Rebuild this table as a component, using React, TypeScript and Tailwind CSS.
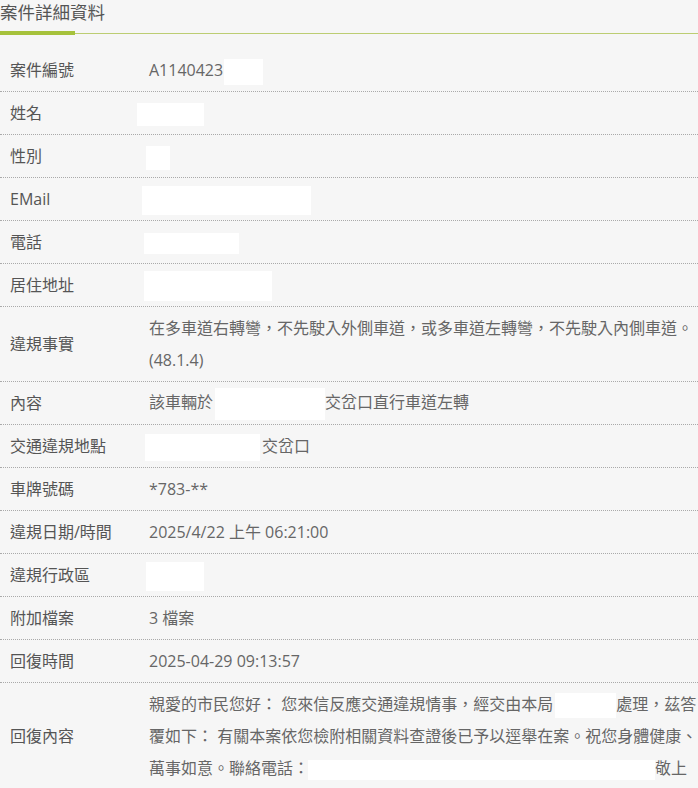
import React from 'react'

type Row = {
  label: string
  value: React.ReactNode
  lines?: 1 | 2 | 3
}

// white redaction block, same as in the screenshot
function Blank({ w, h, ml = 0 }: { w: number; h: number; ml?: number }) {
  return (
    <span
      className="inline-block align-middle bg-white"
      style={{ width: w, height: h, marginLeft: ml }}
    />
  )
}

const ROW_HEIGHT = {
  1: 'h-[43px]',
  2: 'h-[75px]',
  3: 'h-[107px]',
}

const ROWS: Row[] = [
  { label: '案件編號', value: <>A1140423<Blank w={39} h={26} ml={1} /></> },
  { label: '姓名', value: <Blank w={67} h={23} ml={-12} /> },
  { label: '性別', value: <Blank w={24} h={24} ml={-3} /> },
  { label: 'EMail', value: <Blank w={169} h={29} ml={-7} /> },
  { label: '電話', value: <Blank w={95} h={21} ml={-5} /> },
  { label: '居住地址', value: <Blank w={128} h={30} ml={-5} /> },
  {
    label: '違規事實',
    value: '在多車道右轉彎，不先駛入外側車道，或多車道左轉彎，不先駛入內側車道。(48.1.4)',
    lines: 2,
  },
  { label: '內容', value: <>該車輛於<Blank w={110} h={32} ml={2} />交岔口直行車道左轉</> },
  { label: '交通違規地點', value: <><Blank w={115} h={27} ml={-4} /><span className="ml-[2px]">交岔口</span></> },
  { label: '車牌號碼', value: '*783-**' },
  { label: '違規日期/時間', value: '2025/4/22 上午 06:21:00' },
  { label: '違規行政區', value: <Blank w={58} h={29} ml={-3} /> },
  { label: '附加檔案', value: '3 檔案' },
  { label: '回復時間', value: '2025-04-29 09:13:57' },
  {
    label: '回復內容',
    lines: 3,
    value: (
      <>
        <span className="block whitespace-nowrap">
          親愛的市民您好： 您來信反應交通違規情事，經交由本局<Blank w={61} h={25} ml={2} />處理，茲答
        </span>
        <span className="block whitespace-nowrap">
          覆如下： 有關本案依您檢附相關資料查證後已予以逕舉在案。祝您身體健康、
        </span>
        <span className="block whitespace-nowrap">
          萬事如意。聯絡電話：<Blank w={347} h={20} ml={-1} />敬上
        </span>
      </>
    ),
  },
]

export default function App() {
  return (
    <div
      className="h-[788px] w-[698px] overflow-hidden bg-[#f6f6f6] text-[#555]"
      style={{ fontFamily: '"Open Sans", "Noto Sans CJK TC", sans-serif' }}
    >
      {/* Title */}
      <div className="relative h-[34px] border-b border-[#bccd72]">
        <h2 className="text-[17.5px] leading-[24px] text-[#555] font-normal">案件詳細資料</h2>
        <div className="absolute left-0 bottom-[-2px] h-[4px] w-[75px] bg-[#a6c23b]" />
      </div>

      {/* Detail table */}
      <div className="mt-[15px]">
        {ROWS.map(row => (
          <div
            key={row.label}
            className={`grid grid-cols-[140px_1fr] items-center border-b border-dotted border-[#aaa] text-[16px] leading-[32px] ${ROW_HEIGHT[row.lines ?? 1]}`}
          >
            <div className="pl-[10px] text-[#555]">{row.label}</div>
            <div className="pl-[9px] text-[#666]">{row.value}</div>
          </div>
        ))}
      </div>
    </div>
  )
}
